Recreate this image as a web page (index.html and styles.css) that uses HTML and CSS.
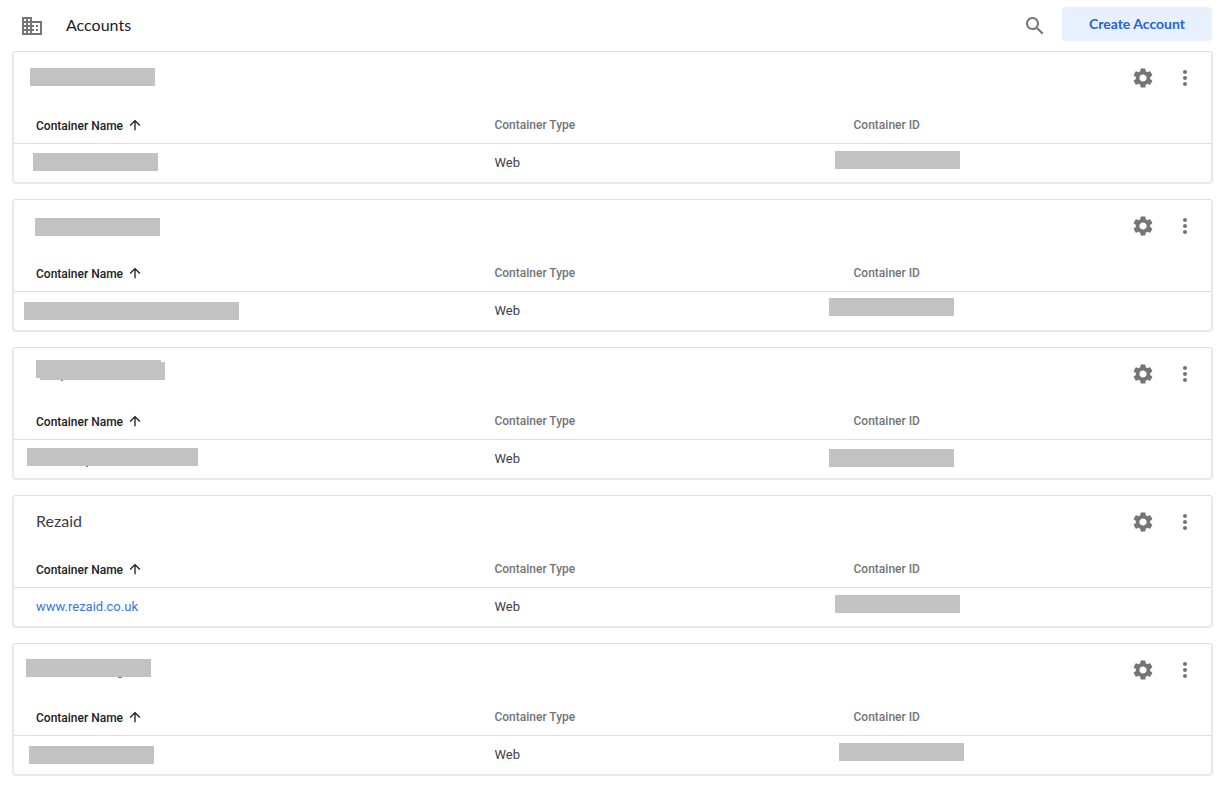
FILE: index.html
```html
<!DOCTYPE html>
<html lang="en">
<head>
<meta charset="utf-8">
<title>Accounts</title>
<meta name="viewport" content="width=device-width, initial-scale=1">
<link rel="stylesheet" href="styles.css">
</head>
<body>
<svg class="sprite" aria-hidden="true">
  <symbol id="gear" viewBox="0 0 24 24"><path d="M19.14 12.94c.04-.3.06-.61.06-.94 0-.32-.02-.64-.07-.94l2.03-1.58c.18-.14.23-.41.12-.61l-1.92-3.32c-.12-.22-.37-.29-.59-.22l-2.39.96c-.5-.38-1.03-.7-1.62-.94l-.36-2.54c-.04-.24-.24-.41-.48-.41h-3.84c-.24 0-.43.17-.47.41l-.36 2.54c-.59.24-1.13.57-1.62.94l-2.39-.96c-.22-.08-.47 0-.59.22L2.74 8.87c-.12.21-.08.47.12.61l2.03 1.58c-.05.3-.09.63-.09.94s.02.64.07.94l-2.03 1.58c-.18.14-.23.41-.12.61l1.92 3.32c.12.22.37.29.59.22l2.39-.96c.5.38 1.03.7 1.62.94l.36 2.54c.05.24.24.41.48.41h3.84c.24 0 .44-.17.47-.41l.36-2.54c.59-.24 1.13-.56 1.62-.94l2.39.96c.22.08.47 0 .59-.22l1.92-3.32c.12-.22.07-.47-.12-.61l-2.01-1.58zM12 15.6c-1.98 0-3.6-1.62-3.6-3.6s1.62-3.6 3.6-3.6 3.6 1.62 3.6 3.6-1.62 3.6-3.6 3.6z"/></symbol>
  <symbol id="more" viewBox="0 0 24 24"><path d="M12 8c1.1 0 2-.9 2-2s-.9-2-2-2-2 .9-2 2 .9 2 2 2zm0 2c-1.1 0-2 .9-2 2s.9 2 2 2 2-.9 2-2-.9-2-2-2zm0 6c-1.1 0-2 .9-2 2s.9 2 2 2 2-.9 2-2-.9-2-2-2z"/></symbol>
  <symbol id="up" viewBox="0 0 24 24"><path d="M4 12l1.41 1.41L11 7.83V20h2V7.83l5.58 5.59L20 12l-8-8-8 8z"/></symbol>
</svg>

<header class="topbar">
  <svg class="icon" viewBox="0 0 24 24" aria-hidden="true"><path d="M12 7V3H2v18h20V7H12zM6 19H4v-2h2v2zm0-4H4v-2h2v2zm0-4H4V9h2v2zm0-4H4V5h2v2zm4 12H8v-2h2v2zm0-4H8v-2h2v2zm0-4H8V9h2v2zm0-4H8V5h2v2zm10 12h-8v-2h2v-2h-2v-2h2v-2h-2V9h8v10zm-2-8h-2v2h2v-2zm0 4h-2v2h2v-2z"/></svg>
  <h1 class="page-title">Accounts</h1>
  <button class="icon-button" type="button" aria-label="Search"><svg class="icon" viewBox="0 0 24 24"><path d="M15.5 14h-.79l-.28-.27C15.41 12.59 16 11.11 16 9.5 16 5.91 13.09 3 9.5 3S3 5.91 3 9.5 5.91 16 9.5 16c1.61 0 3.09-.59 4.23-1.57l.27.28v.79l5 4.99L20.49 19l-4.99-5zm-6 0C7.01 14 5 11.99 5 9.5S7.01 5 9.5 5 14 7.01 14 9.5 11.99 14 9.5 14z"/></svg></button>
  <button class="create" type="button">Create Account</button>
</header>

<main class="accounts">
  <section class="card first">
    <div class="card-head">
      <h2 class="card-title"><span class="mask"></span></h2>
      <button class="icon-button" type="button" aria-label="Settings"><svg class="icon"><use href="#gear"/></svg></button>
      <button class="icon-button" type="button" aria-label="More"><svg class="icon"><use href="#more"/></svg></button>
    </div>
    <table class="containers">
      <thead><tr><th class="name">Container Name <svg class="sort"><use href="#up"/></svg></th><th class="type">Container Type</th><th class="id">Container ID</th></tr></thead>
      <tbody><tr><td class="name"><span class="mask"></span></td><td>Web</td><td class="id"><span class="mask"></span></td></tr></tbody>
    </table>
  </section>

  <section class="card second">
    <div class="card-head">
      <h2 class="card-title"><span class="mask"></span></h2>
      <button class="icon-button" type="button" aria-label="Settings"><svg class="icon"><use href="#gear"/></svg></button>
      <button class="icon-button" type="button" aria-label="More"><svg class="icon"><use href="#more"/></svg></button>
    </div>
    <table class="containers">
      <thead><tr><th class="name">Container Name <svg class="sort"><use href="#up"/></svg></th><th class="type">Container Type</th><th class="id">Container ID</th></tr></thead>
      <tbody><tr><td class="name"><span class="mask"></span></td><td>Web</td><td class="id"><span class="mask"></span></td></tr></tbody>
    </table>
  </section>

  <section class="card third">
    <div class="card-head">
      <h2 class="card-title"><span class="mask"></span><span class="mask extra"></span><span class="speck"></span></h2>
      <button class="icon-button" type="button" aria-label="Settings"><svg class="icon"><use href="#gear"/></svg></button>
      <button class="icon-button" type="button" aria-label="More"><svg class="icon"><use href="#more"/></svg></button>
    </div>
    <table class="containers">
      <thead><tr><th class="name">Container Name <svg class="sort"><use href="#up"/></svg></th><th class="type">Container Type</th><th class="id">Container ID</th></tr></thead>
      <tbody><tr><td class="name"><span class="mask"></span><span class="speck"></span></td><td>Web</td><td class="id"><span class="mask"></span></td></tr></tbody>
    </table>
  </section>

  <section class="card fourth">
    <div class="card-head">
      <h2 class="card-title">Rezaid</h2>
      <button class="icon-button" type="button" aria-label="Settings"><svg class="icon"><use href="#gear"/></svg></button>
      <button class="icon-button" type="button" aria-label="More"><svg class="icon"><use href="#more"/></svg></button>
    </div>
    <table class="containers">
      <thead><tr><th class="name">Container Name <svg class="sort"><use href="#up"/></svg></th><th class="type">Container Type</th><th class="id">Container ID</th></tr></thead>
      <tbody><tr><td class="name"><a class="link" href="#">www.rezaid.co.uk</a></td><td>Web</td><td class="id"><span class="mask"></span></td></tr></tbody>
    </table>
  </section>

  <section class="card fifth">
    <div class="card-head">
      <h2 class="card-title"><span class="mask"></span><span class="speck"></span></h2>
      <button class="icon-button" type="button" aria-label="Settings"><svg class="icon"><use href="#gear"/></svg></button>
      <button class="icon-button" type="button" aria-label="More"><svg class="icon"><use href="#more"/></svg></button>
    </div>
    <table class="containers">
      <thead><tr><th class="name">Container Name <svg class="sort"><use href="#up"/></svg></th><th class="type">Container Type</th><th class="id">Container ID</th></tr></thead>
      <tbody><tr><td class="name"><span class="mask"></span></td><td>Web</td><td class="id"><span class="mask"></span></td></tr></tbody>
    </table>
  </section>
</main>
</body>
</html>
```
FILE: styles.css
```css
* { box-sizing: border-box; }

body {
  margin: 0;
  background: #fff;
  color: #3c4043;
  font-family: Roboto, "Liberation Sans", sans-serif;
  font-size: 13px;
}

button { border: 0; font: inherit; cursor: pointer; }

.sprite { position: absolute; width: 0; height: 0; }

.icon { display: block; width: 24px; height: 24px; fill: #757575; }

.icon-button {
  display: flex;
  align-items: center;
  justify-content: center;
  width: 42px;
  height: 42px;
  padding: 0;
  background: none;
}

/* Top bar */
.topbar {
  display: flex;
  align-items: center;
  height: 51px;
  padding: 0 12px 0 20px;
}

.page-title {
  flex: 1;
  margin: 0 0 0 22px;
  padding-bottom: 2px;
  color: #202124;
  font: 400 16px/24px Lato, sans-serif;
}

.create {
  height: 34px;
  margin: 0 0 3px 6px;
  padding: 0 27px;
  border-radius: 4px;
  background: #e8f0fe;
  color: #2563cf;
  font: 700 14px/20px Lato, sans-serif;
}

/* Account cards */
.accounts {
  display: flex;
  flex-direction: column;
  gap: 15px;
  padding: 0 11px 12px 12px;
}

.card {
  border: 2px solid #e8e8e8;
  border-top: 1px solid #dadce0;
  border-radius: 4px;
}

.card-head {
  position: relative;
  display: flex;
  align-items: center;
  height: 51px;
  padding: 0 5px 0 22px;
}

.card-title {
  flex: 1;
  margin: 0;
  padding-bottom: 2px;
  font: 400 16px/24px Lato, sans-serif;
}

.containers {
  width: 100%;
  border-collapse: separate;
  border-spacing: 0;
  table-layout: fixed;
}

.containers th,
.containers td {
  padding: 0 0 0 22px;
  text-align: left;
  vertical-align: middle;
}

.containers th {
  height: 41px;
  padding-top: 4px;
  border-bottom: 1px solid #dadce0;
  color: #757575;
  font-size: 12px;
  font-weight: 500;
}

.containers th.name { width: 38.3%; color: #202124; }
.containers th.type { width: 30%; }
.containers td { position: relative; height: 38px; padding-bottom: 2px; }

.sort {
  width: 16px;
  height: 16px;
  margin-left: 1px;
  vertical-align: -3px;
  fill: #202124;
}

.link { color: #3576e0; text-decoration: none; }

/* Masks lie over the private names and ids */
.mask {
  position: absolute;
  width: 125px;
  height: 18px;
  background: #c2c2c2;
}

.speck {
  position: absolute;
  width: 4px;
  height: 1px;
  background: #777;
}

.first .card-title .mask { left: 16px; top: 16px; }
.first td.name .mask { left: 19px; top: 9px; }
.first td.id .mask { left: 3px; top: 7px; }

.second .card-title .mask { left: 21px; top: 18px; }
.second td.name .mask { left: 10px; top: 10px; width: 215px; }
.second td.id .mask { left: -3px; top: 6px; }

.third .card-title .mask { left: 22px; top: 12px; }
.third .card-title .extra { left: 26px; top: 14px; }
.third .card-title .speck { left: 47px; top: 32px; width: 2px; }
.third td.name .mask { left: 13px; top: 8px; width: 171px; }
.third td.name .speck { left: 72px; top: 26px; width: 2px; }
.third td.id .mask { left: -3px; top: 9px; }

.fourth td.id .mask { left: 3px; top: 7px; }

.fifth .card-title .mask { left: 12px; top: 15px; }
.fifth .card-title .speck { left: 104px; top: 33px; }
.fifth td.name .mask { left: 15px; top: 10px; }
.fifth td.id .mask { left: 7px; top: 7px; }
```
